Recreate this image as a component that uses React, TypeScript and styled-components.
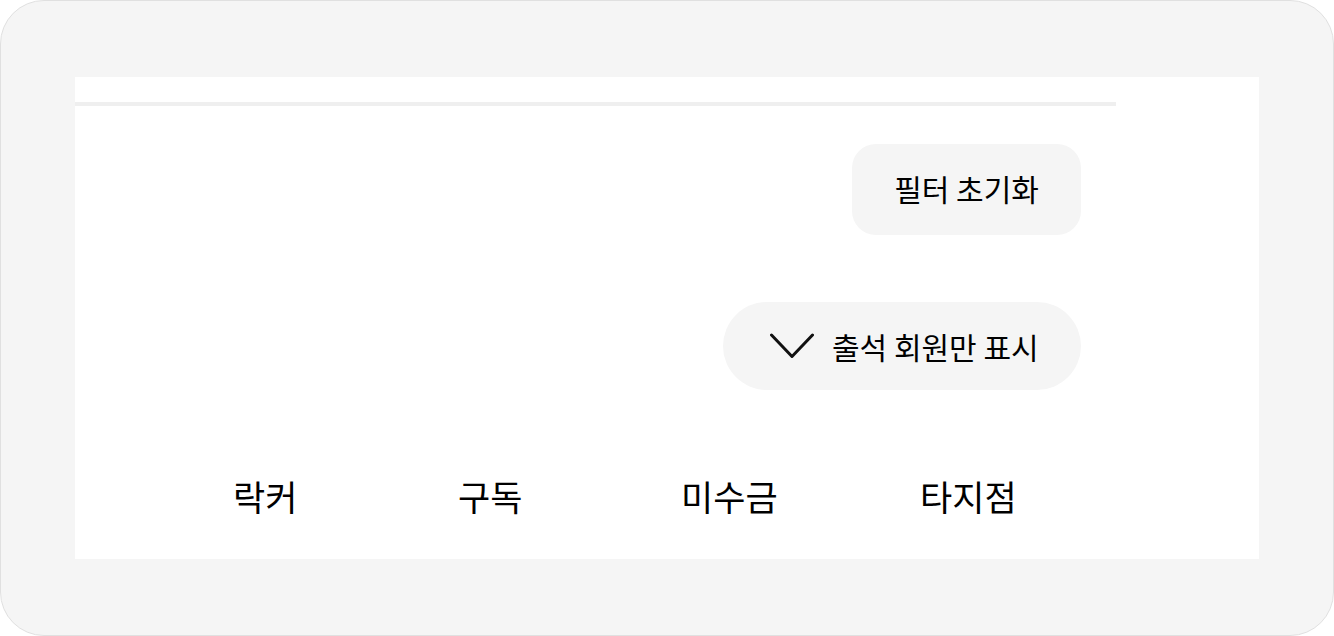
import React from 'react';
import styled, { createGlobalStyle } from 'styled-components';

const GlobalStyle = createGlobalStyle`
  html, body {
    margin: 0;
    padding: 0;
    background: #ffffff;
  }
  * {
    box-sizing: border-box;
  }
  body {
    font-family: 'Noto Sans CJK KR', 'Noto Sans', sans-serif;
    color: #111111;
  }
`;

const Frame = styled.div`
  width: 1334px;
  height: 636px;
  border: 1px solid #e0e0e0;
  border-radius: 44px;
  background: #f5f5f5;
  padding: 76px 74px 0 74px;
`;

const Panel = styled.div`
  width: 1184px;
  height: 482px;
  background: #ffffff;
  padding-top: 25px;
  display: flex;
  flex-direction: column;
`;

const Divider = styled.div`
  width: 1041px;
  height: 4px;
  background: #efefef;
`;

const Actions = styled.div`
  display: flex;
  flex-direction: column;
  align-items: flex-end;
  padding-right: 178px;
  margin-top: 38px;
  gap: 67px;
`;

const ResetButton = styled.button`
  width: 229px;
  height: 91px;
  border: none;
  border-radius: 24px;
  background: #f5f5f5;
  font-family: inherit;
  font-size: 30px;
  font-weight: 400;
  color: #000000;
  display: flex;
  align-items: center;
  justify-content: center;
  padding: 0 0 3px 0;
  cursor: pointer;
`;

const ToggleButton = styled.button`
  width: 358px;
  height: 88px;
  border: none;
  border-radius: 44px;
  background: #f5f5f5;
  font-family: inherit;
  font-size: 30px;
  font-weight: 400;
  color: #000000;
  display: flex;
  align-items: center;
  padding: 0 0 0 47px;
  gap: 18px;
  cursor: pointer;
`;

const Tabs = styled.div`
  display: grid;
  grid-template-columns: 225px 223px 239px auto;
  padding-left: 158px;
  margin-top: 84px;
`;

const Tab = styled.div`
  font-size: 35px;
  font-weight: 400;
  line-height: 44px;
  color: #000000;
`;

const Chevron = () => (
  <svg width="44" height="26" viewBox="0 0 44 26" fill="none">
    <polyline
      points="1.5,2 22,23.5 42.5,2"
      stroke="#111111"
      strokeWidth="3"
      strokeLinecap="round"
      strokeLinejoin="round"
    />
  </svg>
);

const tabs = ['락커', '구독', '미수금', '타지점'];

export default function App() {
  return (
    <>
      <GlobalStyle />
      <Frame>
        <Panel>
          <Divider />
          <Actions>
            <ResetButton>필터 초기화</ResetButton>
            <ToggleButton>
              <Chevron />
              출석 회원만 표시
            </ToggleButton>
          </Actions>
          <Tabs>
            {tabs.map((t) => (
              <Tab key={t}>{t}</Tab>
            ))}
          </Tabs>
        </Panel>
      </Frame>
    </>
  );
}
